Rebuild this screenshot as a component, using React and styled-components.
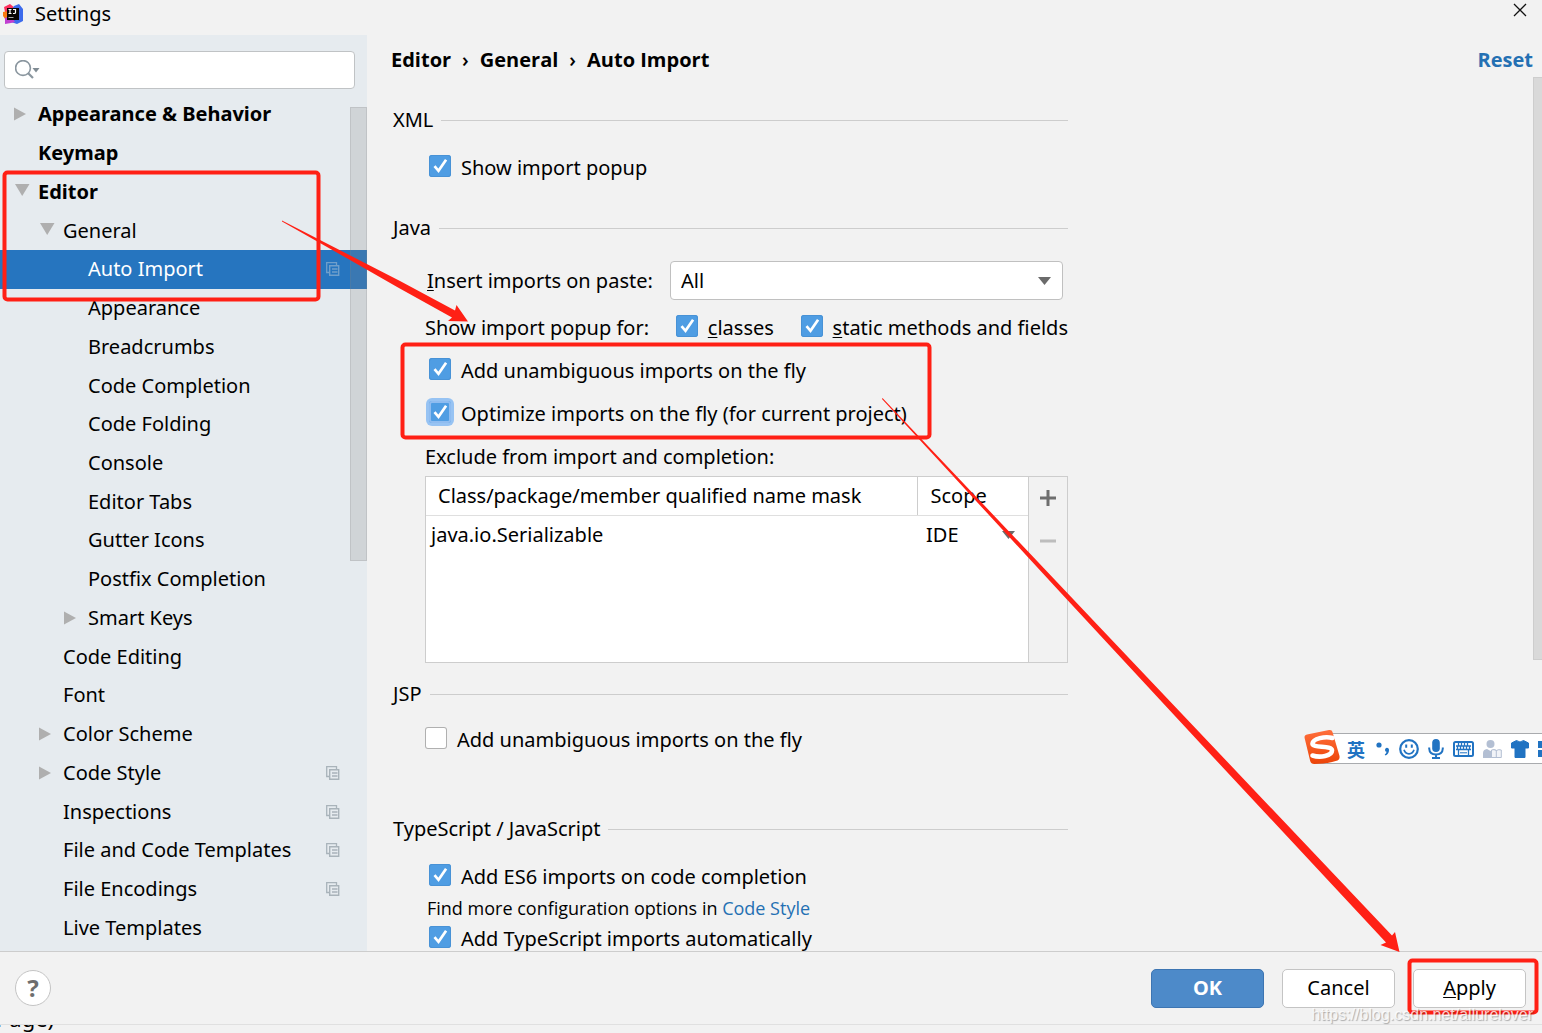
import { useState } from 'react';
import styled, { createGlobalStyle } from 'styled-components';

const GlobalStyle = createGlobalStyle`
  * {
    box-sizing: border-box;
  }
  body {
    margin: 0;
    background: #f2f2f2;
    color: #000;
    font-family: 'Noto Sans', 'Open Sans', 'Noto Sans CJK SC', sans-serif;
    font-size: 20px;
    line-height: 30px;
  }
  button,
  input,
  select {
    font: inherit;
    color: inherit;
    margin: 0;
  }
`;

const treeItems = [
  { label: 'Appearance & Behavior', level: 0, arrow: 'right', bold: true },
  { label: 'Keymap', level: 0, bold: true },
  { label: 'Editor', level: 0, arrow: 'down', bold: true },
  { label: 'General', level: 1, arrow: 'down' },
  { label: 'Auto Import', level: 2, copy: true },
  { label: 'Appearance', level: 2 },
  { label: 'Breadcrumbs', level: 2 },
  { label: 'Code Completion', level: 2 },
  { label: 'Code Folding', level: 2 },
  { label: 'Console', level: 2 },
  { label: 'Editor Tabs', level: 2 },
  { label: 'Gutter Icons', level: 2 },
  { label: 'Postfix Completion', level: 2 },
  { label: 'Smart Keys', level: 2, arrow: 'right' },
  { label: 'Code Editing', level: 1 },
  { label: 'Font', level: 1 },
  { label: 'Color Scheme', level: 1, arrow: 'right' },
  { label: 'Code Style', level: 1, arrow: 'right', copy: true },
  { label: 'Inspections', level: 1, copy: true },
  { label: 'File and Code Templates', level: 1, copy: true },
  { label: 'File Encodings', level: 1, copy: true },
  { label: 'Live Templates', level: 1 },
];

const AppLogo = () => (
  <svg width='20' height='20' viewBox='0 0 20 20' aria-hidden='true'>
    <path d='M1 3 7 0l5 4-2 8-8 3-2-5 2-2z' fill='#fe315d' />
    <path d='M0 8l5-1 3 9-4 1-4-5z' fill='#f97a12' />
    <path d='M11 2l5-2 4 5v12l-6 3-6-2-6 1 2-6z' fill='#3d6bec' />
    <path d='M2 14l6-2 4 6-4 1-6 1z' fill='#c03fd0' />
    <rect x='4' y='4' width='12' height='12' fill='#0a0505' />
    <path
      d='M5.500 5.500h3M7 5.500v4M5.500 9.500h3M10 5.500h2.500v3q0 1-1.300 1H10'
      stroke='#fff'
      strokeWidth='1.200'
      fill='none'
    />
    <path d='M5.500 13.500h5' stroke='#aaa' />
  </svg>
);

const CloseIcon = () => (
  <svg width='14' height='14' viewBox='0 0 14 14' aria-hidden='true'>
    <path d='M1 1l12 12M13 1 1 13' stroke='#111' strokeWidth='1.300' />
  </svg>
);

const SearchIcon = () => (
  <svg width='26' height='20' viewBox='0 0 26 20' aria-hidden='true'>
    <circle cx='8' cy='8' r='7.400' fill='none' stroke='#8a969f' strokeWidth='1.600' />
    <path d='M13 13l5 5' stroke='#8a969f' strokeWidth='2.200' />
    <path d='M17.500 8h7L21 12.500z' fill='#7f8b93' />
  </svg>
);

const TreeArrow = ({ direction }) => (
  <svg width='18' height='18' viewBox='0 0 18 18' aria-hidden='true'>
    {direction === 'right' && <path d='M1 2.500v13l12-6.500z' fill='#afafaf' />}
    {direction === 'down' && <path d='M2 1h14.500L9.200 13z' fill='#afafaf' />}
  </svg>
);

const CopyIcon = () => (
  <svg width='14' height='14' viewBox='0 0 14 14' aria-hidden='true'>
    <path d='M10.500 3V.7H.7v9.800H3' fill='none' stroke='currentColor' strokeWidth='1.300' />
    <path d='M3.700 3.700h9v9.600h-9zM6 7h5.500M6 10h5.500' fill='none' stroke='currentColor' strokeWidth='1.400' />
  </svg>
);

const DropArrow = () => (
  <svg width='13' height='8' viewBox='0 0 13 8' aria-hidden='true'>
    <path d='M0 0h13L6.500 8z' fill='#6b6b6b' />
  </svg>
);

const CheckMark = () => (
  <svg width='22' height='22' viewBox='0 0 22 22' aria-hidden='true'>
    <path d='M5.500 11.200l4 4.600 7.600-11' fill='none' stroke='#fff' strokeWidth='2.700' />
  </svg>
);

const CheckBox = ({ id, label, mnemonic, checked = true, focused }) => {
  const [on, setOn] = useState(checked);
  return (
    <CheckLabel htmlFor={id}>
      <CheckFrame $on={on} $focused={focused}>
        <input id={id} type='checkbox' checked={on} onChange={() => setOn(!on)} />
        {on && <CheckMark />}
      </CheckFrame>
      <span>
        {mnemonic && <u>{label[0]}</u>}
        {mnemonic ? label.slice(1) : label}
      </span>
    </CheckLabel>
  );
};

const Tree = () => {
  const [selected, setSelected] = useState('Auto Import');
  return (
    <TreePane>
      <TreeList>
        {treeItems.map(({ label, level, arrow, bold, copy }) => (
          <TreeRow key={label}>
            <TreeButton
              type='button'
              $level={level}
              $bold={bold}
              $selected={label === selected}
              onClick={() => setSelected(label)}
            >
              <TreeSlot>
                <TreeArrow direction={arrow} />
              </TreeSlot>
              <TreeText>{label}</TreeText>
              {copy && <CopyIcon />}
            </TreeButton>
          </TreeRow>
        ))}
      </TreeList>
      <TreeScroll />
    </TreePane>
  );
};

const ExcludeTable = () => (
  <TableFrame>
    <table>
      <thead>
        <tr>
          <th>Class/package/member qualified name mask</th>
          <th>Scope</th>
        </tr>
      </thead>
      <tbody>
        <tr>
          <td>java.io.Serializable</td>
          <td>
            <SelectBox $plain>
              <select aria-label='Scope' defaultValue='IDE'>
                <option>IDE</option>
                <option>Project</option>
              </select>
              <DropArrow />
            </SelectBox>
          </td>
        </tr>
      </tbody>
    </table>
    <TableTools>
      <button type='button' aria-label='Add'>
        <svg width='16' height='16' viewBox='0 0 16 16'>
          <path d='M8 0v16M0 8h16' stroke='#6e6e6e' strokeWidth='3' />
        </svg>
      </button>
      <button type='button' aria-label='Remove'>
        <svg width='16' height='16' viewBox='0 0 16 16'>
          <path d='M0 8h16' stroke='#bdbdbd' strokeWidth='3' />
        </svg>
      </button>
    </TableTools>
  </TableFrame>
);

const InputBar = () => (
  <ImeBar>
    <svg className='logo' width='36' height='36' viewBox='0 0 36 36' aria-hidden='true'>
      <defs>
        <linearGradient id='ime' x1='0' y1='0' x2='0' y2='1'>
          <stop offset='0' stopColor='#ff6f3c' />
          <stop offset='1' stopColor='#ec4408' />
        </linearGradient>
      </defs>
      <path
        d='M3 5.500 25 1q3-.5 3.500 2L35.500 27q.5 3-2 4.500Q23 35 10 35q-3 0-3.800-3L.6 9Q0 6.200 3 5.500z'
        fill='url(#ime)'
      />
      <path
        d='M28.500 9C21 7 9 9.500 8.500 14.500 8 19.500 28 16 28 21.500c0 5.500-12 7.500-19.500 5'
        fill='none'
        stroke='#fff'
        strokeWidth='4.600'
        strokeLinecap='round'
      />
    </svg>
    <b>英</b>
    <svg width='14' height='16' viewBox='0 0 14 16' aria-hidden='true'>
      <circle cx='3' cy='4' r='2.600' fill='#2173c2' />
      <path d='M9.500 7.500a2 2 0 0 1 3.500 1.500c0 3-1.500 4.500-3.500 5.500l-.8-1c1-.8 1.800-1.600 1.800-2.800-1.400 0-2-1.800-1-3.200z' fill='#2173c2' />
    </svg>
    <svg width='20' height='20' viewBox='0 0 20 20' aria-hidden='true'>
      <circle cx='10' cy='10' r='8.800' fill='none' stroke='#2173c2' strokeWidth='2.200' />
      <path d='M7.200 5.500v3.200M12.800 5.500v3.200' stroke='#2173c2' strokeWidth='2' />
      <path d='M5 10.800q1.200 4 5 4t5-4' fill='none' stroke='#2173c2' strokeWidth='1.700' />
    </svg>
    <svg width='16' height='20' viewBox='0 0 16 20' aria-hidden='true'>
      <rect x='4.200' y='0' width='7.600' height='13' rx='3.800' fill='#2173c2' />
      <path d='M1.200 8.500v1q.3 6 6.800 6t6.800-6v-1M8 15.500V19M4 19h8' fill='none' stroke='#2173c2' strokeWidth='2' />
    </svg>
    <svg width='21' height='16' viewBox='0 0 21 16' aria-hidden='true'>
      <rect x='1' y='1' width='19' height='14' rx='1.500' fill='none' stroke='#2173c2' strokeWidth='2' />
      <path d='M3 5h15M3 8.500h15' stroke='#2173c2' strokeWidth='1.300' />
      <path d='M5.500 2v3M8.500 2v3M11.500 2v3M14.500 2v3M4.500 5v3M7.500 5v3M10.500 5v3M13.500 5v3M16.500 5v3M5.500 9v5M15.500 9v5' stroke='#2173c2' strokeWidth='1.300' />
      <path d='M7 11.800h7' stroke='#2173c2' strokeWidth='1' />
    </svg>
    <svg width='19' height='18' viewBox='0 0 19 18' aria-hidden='true'>
      <circle cx='7.500' cy='4' r='4' fill='#b3bfd3' />
      <path d='M0 18v-5q0-3.500 4-4l3.500 2L11 9q3 .5 3.500 3v6z' fill='#b3bfd3' />
      <path d='M8.500 10q2.500-1 4.800.5 2.500-1.500 5-.5v7.500h-9.800zM13.300 10.500v7' fill='#f2f4f8' stroke='#b3bfd3' />
    </svg>
    <svg width='18' height='18' viewBox='0 0 18 18' aria-hidden='true'>
      <path d='M5.500.5q3.500 3 7 0L17.500 3v5H14v9.500H4V8H.5V3z' fill='#2173c2' stroke='#2173c2' strokeLinejoin='round' />
    </svg>
    <svg width='16' height='16' viewBox='0 0 16 16' aria-hidden='true'>
      <path d='M0 0h7v7H0zM0 9h7v7H0zM9 0h7v7H9zM9 9h7v7H9z' fill='#2173c2' />
    </svg>
  </ImeBar>
);

// Red boxes and arrows drawn over the dialog
const Markup = () => (
  <MarkupLayer aria-hidden='true'>
    <g fill='none' stroke='#ff2015' strokeWidth='4'>
      <rect x='4.500' y='172.500' width='314' height='127' rx='3' />
      <rect x='402.500' y='344.500' width='527' height='93' rx='3' />
      <rect x='1409.500' y='960.500' width='127' height='52' rx='3' />
    </g>
    <g fill='#ff2015'>
      <path d='M282 220.500 400 281l55 29.500 1.500-5.500 11.500 16.500-20-.5 4-3.500L398 287.500 350 260l-68-38.500z' />
      <path d='M882.500 398 1100 627.500l292 308 3-3.500 4.500 20-19-7 5.500-2.500L1200 743 1060 592 882 399z' />
    </g>
  </MarkupLayer>
);

const App = () => {
  return (
    <Wrapper>
      <GlobalStyle />
      <TitleBar>
        <AppLogo />
        <h1>Settings</h1>
        <button type='button' aria-label='Close'>
          <CloseIcon />
        </button>
      </TitleBar>
      <Body>
        <Sidebar>
          <SearchBox>
            <SearchIcon />
            <input type='text' aria-label='Search settings' />
          </SearchBox>
          <Tree />
        </Sidebar>
        <Content>
          <ContentHeader>
            <Crumbs>
              <span>Editor</span>
              <i>›</i>
              <span>General</span>
              <i>›</i>
              <span>Auto Import</span>
            </Crumbs>
            <a href='#reset'>Reset</a>
          </ContentHeader>
          <Form>
            <Section>
              <Legend>XML</Legend>
              <Fields $indent>
                <CheckBox id='xml-popup' label='Show import popup' />
              </Fields>
            </Section>
            <Section $gap={30}>
              <Legend>Java</Legend>
              <Fields>
                <PasteRow>
                  <label htmlFor='paste'>
                    <u>I</u>nsert imports on paste:
                  </label>
                  <SelectBox>
                    <select id='paste' defaultValue='All'>
                      <option>All</option>
                      <option>Ask</option>
                      <option>None</option>
                    </select>
                    <DropArrow />
                  </SelectBox>
                </PasteRow>
                <PopupRow>
                  <span>Show import popup for:</span>
                  <CheckBox id='classes' label='classes' mnemonic />
                  <CheckBox id='static' label='static methods and fields' mnemonic />
                </PopupRow>
                <Fields $indent $nested>
                  <CheckBox id='java-add' label='Add unambiguous imports on the fly' />
                  <CheckBox
                    id='java-optimize'
                    label='Optimize imports on the fly (for current project)'
                    focused
                  />
                </Fields>
                <div>
                  <TableTitle>Exclude from import and completion:</TableTitle>
                  <ExcludeTable />
                </div>
              </Fields>
            </Section>
            <Section $gap={16}>
              <Legend $tight>JSP</Legend>
              <Fields>
                <CheckBox id='jsp-add' label='Add unambiguous imports on the fly' checked={false} />
              </Fields>
            </Section>
            <Section $gap={59}>
              <Legend>TypeScript / JavaScript</Legend>
              <Fields $indent $tight>
                <CheckBox id='es6' label='Add ES6 imports on code completion' />
                <Hint>
                  Find more configuration options in <a href='#code-style'>Code Style</a>
                </Hint>
                <CheckBox id='ts' label='Add TypeScript imports automatically' />
              </Fields>
            </Section>
          </Form>
          <ContentScroll />
        </Content>
      </Body>
      <Footer>
        <HelpButton type='button'>?</HelpButton>
        <Button type='button' $primary>
          OK
        </Button>
        <Button type='button'>Cancel</Button>
        <Button type='button'>
          <u>A</u>pply
        </Button>
      </Footer>
      <Behind>
        <span>Page)</span>
      </Behind>
      <InputBar />
      <Markup />
      <Watermark>https://blog.csdn.net/allurelover</Watermark>
    </Wrapper>
  );
};

const Wrapper = styled.main`
  position: relative;
  display: flex;
  flex-direction: column;
  height: 100vh;
  overflow: hidden;
  u {
    text-decoration-thickness: 1px;
    text-underline-offset: 2px;
  }
`;

const TitleBar = styled.header`
  display: flex;
  align-items: center;
  height: 35px;
  padding: 0 15px 8px 3px;
  h1 {
    flex: 1;
    margin: 0 0 0 12px;
    font-size: 20px;
    font-weight: 400;
  }
  button {
    display: flex;
    padding: 0;
    border: 0;
    background: none;
  }
  button svg {
    margin-bottom: 8px;
  }
`;

const Body = styled.div`
  display: flex;
  flex: 1;
  min-height: 0;
`;

const Sidebar = styled.aside`
  display: flex;
  flex-direction: column;
  width: 367px;
  padding-top: 16px;
  background: #e6ebef;
`;

const SearchBox = styled.div`
  display: flex;
  align-items: center;
  height: 38px;
  margin: 0 12px 6px 4px;
  padding-left: 10px;
  border: 1px solid #c0c3c5;
  border-radius: 4px;
  background: #fff;
  input {
    flex: 1;
    min-width: 0;
    border: 0;
    outline: 0;
    background: none;
  }
`;

const TreePane = styled.nav`
  position: relative;
  display: flex;
  flex: 1;
  padding-bottom: 4px;
`;

const TreeList = styled.ul`
  display: flex;
  flex: 1;
  flex-direction: column;
  margin: 0;
  padding: 0;
  list-style: none;
`;

const TreeRow = styled.li`
  display: flex;
  flex: 1;
`;

const TreeButton = styled.button`
  display: flex;
  flex: 1;
  align-items: center;
  padding: 0 27px 0 ${({ $level }) => 13 + $level * 25}px;
  border: 0;
  background: ${({ $selected }) => ($selected ? '#2675bf' : 'none')};
  color: ${({ $selected }) => ($selected ? '#fff' : '#000')};
  font-weight: ${({ $bold }) => ($bold ? 700 : 400)};
  line-height: 30px;
  text-align: left;
  > svg {
    color: ${({ $selected }) => ($selected ? '#6f9fcb' : '#a9b3ba')};
  }
`;

const TreeSlot = styled.span`
  display: flex;
  width: 25px;
`;

const TreeText = styled.span`
  flex: 1;
`;

const TreeScroll = styled.div`
  position: absolute;
  top: 12px;
  right: 0;
  width: 17px;
  height: 53%;
  border: 1px solid rgba(130, 130, 130, 0.2);
  background: rgba(130, 130, 130, 0.22);
`;

const Content = styled.section`
  position: relative;
  flex: 1;
  overflow: hidden;
`;

const ContentHeader = styled.div`
  display: flex;
  align-items: center;
  justify-content: space-between;
  height: 50px;
  padding: 0 9px 0 24px;
  font-family: 'Open Sans', 'Noto Sans', sans-serif;
  font-weight: 700;
  a {
    color: #2470b3;
    text-decoration: none;
  }
`;

const Crumbs = styled.div`
  display: flex;
  gap: 11px;
  i {
    font-style: normal;
    font-weight: 600;
  }
`;

const Form = styled.form`
  max-width: 701px;
  padding: 20px 0 0 26px;
`;

const Section = styled.section`
  margin-top: ${({ $gap }) => $gap || 0}px;
`;

const Legend = styled.h2`
  display: flex;
  align-items: center;
  gap: 8px;
  margin: 0 0 ${({ $tight }) => ($tight ? 16 : 18)}px;
  font-size: 20px;
  font-weight: 400;
  &::after {
    content: '';
    flex: 1;
    height: 1px;
    background: #cdcdcd;
  }
`;

const Fields = styled.div`
  display: flex;
  flex-direction: column;
  gap: ${({ $tight }) => ($tight ? 1 : 13)}px;
  padding-left: ${({ $indent, $nested }) => ($nested ? 4 : $indent ? 36 : 32)}px;
`;

const CheckLabel = styled.label`
  display: flex;
  align-items: center;
  gap: 10px;
  white-space: nowrap;
`;

const CheckFrame = styled.span`
  display: flex;
  width: 22px;
  height: 22px;
  margin-bottom: 4px;
  border-radius: 3px;
  background: ${({ $on }) => ($on ? '#4f9de3' : '#fff')};
  box-shadow: ${({ $on, $focused }) =>
    $focused
      ? 'inset 0 0 0 2px #8fbcf0, 0 0 0 3px #97c3f3'
      : `inset 0 0 0 1px ${$on ? '#4892d6' : '#b0b0b0'}`};
  input {
    width: 22px;
    height: 22px;
    margin-right: -22px;
    opacity: 0;
  }
`;

const PasteRow = styled.div`
  display: flex;
  align-items: center;
  justify-content: space-between;
  gap: 16px;
  padding: 0 5px 0 2px;
  white-space: nowrap;
`;

const SelectBox = styled.div`
  display: flex;
  flex: 1;
  align-items: center;
  max-width: 393px;
  height: ${({ $plain }) => ($plain ? 38 : 39)}px;
  padding-right: ${({ $plain }) => ($plain ? 13 : 11)}px;
  border: ${({ $plain }) => ($plain ? '0' : '1px solid #c0c0c0')};
  border-radius: 4px;
  background: #fff;
  select {
    flex: 1;
    height: 36px;
    margin-right: -13px;
    padding: 0 0 0 ${({ $plain }) => ($plain ? 0 : 10)}px;
    border: 0;
    outline: 0;
    background: none;
    appearance: none;
  }
  svg {
    pointer-events: none;
  }
`;

const PopupRow = styled.div`
  display: flex;
  justify-content: space-between;
  white-space: nowrap;
`;

const TableTitle = styled.div`
  margin-bottom: 4px;
`;

const TableFrame = styled.div`
  display: flex;
  align-items: flex-start;
  height: 187px;
  border: 1px solid #cdcdcd;
  background: #fff;
  table {
    flex: 1;
    border-collapse: collapse;
  }
  th,
  td {
    height: 38px;
    padding: 0 0 0 5px;
    font-weight: 400;
    text-align: left;
    white-space: nowrap;
  }
  th {
    padding-left: 12px;
    border-bottom: 1px solid #dfdfdf;
  }
  th + th {
    padding-left: 13px;
    border-left: 1px solid #cdcdcd;
  }
  th + th,
  td + td {
    width: 111px;
  }
  td + td {
    padding-left: 9px;
  }
`;

const TableTools = styled.div`
  display: flex;
  flex-direction: column;
  align-self: stretch;
  align-items: center;
  width: 39px;
  padding-top: 13px;
  gap: 27px;
  border-left: 1px solid #cdcdcd;
  background: #f2f2f2;
  button {
    display: flex;
    padding: 0;
    border: 0;
    background: none;
  }
`;

const Hint = styled.p`
  margin: 0 0 0 -2px;
  font-family: 'Open Sans', 'Noto Sans', sans-serif;
  font-size: 18px;
  a {
    color: #2470b3;
    text-decoration: none;
  }
`;

const ContentScroll = styled.div`
  position: absolute;
  top: 42px;
  right: 0;
  width: 9px;
  height: 583px;
  border: 1px solid #cdcdcd;
  border-right: 0;
  background: #d9d9d9;
`;

const Footer = styled.footer`
  display: flex;
  align-items: center;
  gap: 18px;
  height: 74px;
  padding: 0 16px 0 15px;
  border-top: 1px solid #cdcdcd;
  border-bottom: 1px solid #e0e0e0;
`;

const Button = styled.button`
  width: 113px;
  height: 39px;
  padding: 0;
  border: 1px solid ${({ $primary }) => ($primary ? '#3d75b2' : '#c4c4c4')};
  border-radius: 5px;
  background: ${({ $primary }) => ($primary ? '#4d8ac9' : '#fff')};
  color: ${({ $primary }) => ($primary ? '#fff' : '#000')};
  font-weight: ${({ $primary }) => ($primary ? 700 : 400)};
`;

const HelpButton = styled.button`
  width: 36px;
  height: 36px;
  margin-right: auto;
  padding: 0;
  border: 1px solid #c4c4c4;
  border-radius: 50%;
  background: #fff;
  color: #6e6e6e;
  font-size: 24px;
  font-weight: 700;
`;

const Behind = styled.div`
  display: flex;
  align-items: flex-end;
  height: 8px;
  overflow: hidden;
  font-size: 22px;
  line-height: 30px;
  span {
    margin-left: -4px;
  }
`;

const ImeBar = styled.div`
  position: absolute;
  top: 733px;
  right: -12px;
  display: flex;
  align-items: center;
  gap: 9px;
  height: 31px;
  border: 1px solid #a9abae;
  border-width: 1px 0;
  background: #fff;
  .logo {
    margin: 0 -2px 4px -11px;
  }
  b {
    margin-right: 2px;
    color: #2173c2;
    font-family: 'Noto Sans CJK SC', sans-serif;
    font-size: 18px;
  }
`;

const MarkupLayer = styled.svg`
  position: absolute;
  inset: 0;
  width: 100%;
  height: 100%;
  pointer-events: none;
`;

const Watermark = styled.div`
  position: absolute;
  right: 9px;
  bottom: 6px;
  color: rgba(255, 255, 255, 0.8);
  font-family: 'Liberation Sans', sans-serif;
  font-size: 16px;
  line-height: 24px;
  text-shadow: 1px 1px 1px rgba(0, 0, 0, 0.3);
  pointer-events: none;
`;

export default App;
